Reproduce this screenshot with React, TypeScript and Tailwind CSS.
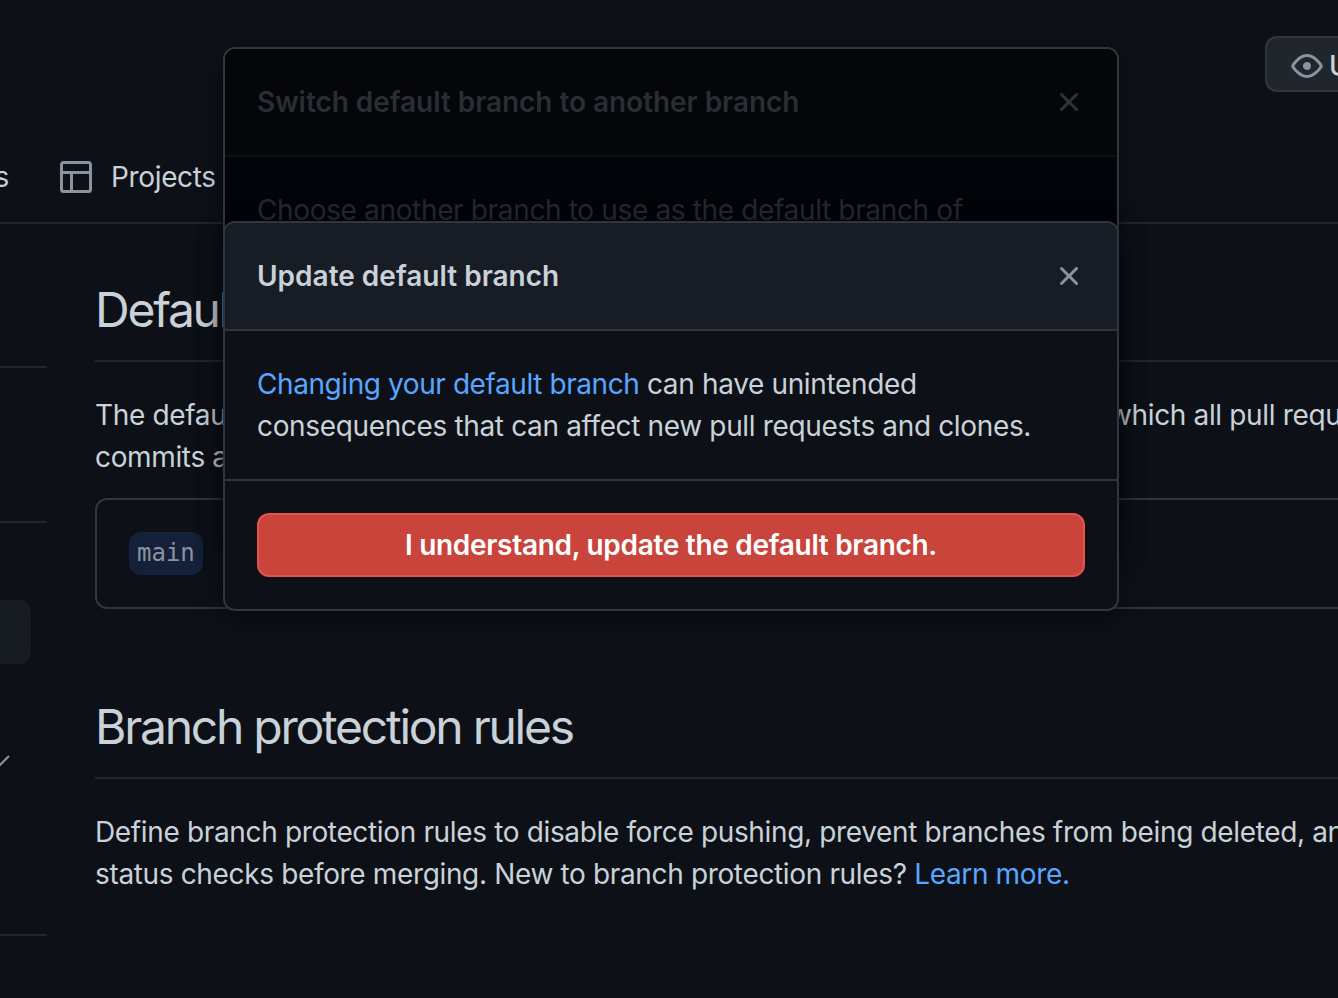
function ProjectIcon() {
  return (
    <svg viewBox="0 0 16 16" className="w-8 h-8 shrink-0 fill-[#8b949e]">
      <path d="M0 1.75C0 .784.784 0 1.75 0h12.5C15.216 0 16 .784 16 1.75v12.5A1.75 1.75 0 0 1 14.25 16H1.75A1.75 1.75 0 0 1 0 14.25ZM1.5 6.5v7.75c0 .138.112.25.25.25H5v-8Zm5 8h7.75a.25.25 0 0 0 .25-.25V6.5h-8Zm8-9.5V1.75a.25.25 0 0 0-.25-.25H1.75a.25.25 0 0 0-.25.25V5Z" />
    </svg>
  )
}

function EyeIcon() {
  return (
    <svg viewBox="0 0 16 16" className="w-8 h-8 shrink-0 fill-[#8b949e]">
      <path d="M8 2c1.981 0 3.671.992 4.933 2.078 1.27 1.091 2.187 2.345 2.637 3.023a1.62 1.62 0 0 1 0 1.798c-.45.678-1.367 1.932-2.637 3.023C11.67 13.008 9.981 14 8 14c-1.981 0-3.671-.992-4.933-2.078C1.797 10.83.88 9.576.43 8.898a1.62 1.62 0 0 1 0-1.798c.45-.677 1.367-1.931 2.637-3.022C4.33 2.992 6.019 2 8 2ZM1.679 7.932a.12.12 0 0 0 0 .136c.411.622 1.241 1.75 2.366 2.717C5.176 11.758 6.527 12.5 8 12.5c1.473 0 2.825-.742 3.955-1.715 1.124-.967 1.954-2.096 2.366-2.717a.12.12 0 0 0 0-.136c-.412-.621-1.242-1.75-2.366-2.717C10.824 4.242 9.473 3.5 8 3.5c-1.473 0-2.825.742-3.955 1.715-1.124.967-1.954 2.096-2.366 2.717ZM8 10a2 2 0 1 1-.001-3.999A2 2 0 0 1 8 10Z" />
    </svg>
  )
}

function CloseIcon({ className }: { className: string }) {
  return (
    <svg viewBox="0 0 16 16" className={`w-8 h-8 shrink-0 ${className}`}>
      <path d="M3.72 3.72a.75.75 0 0 1 1.06 0L8 6.94l3.22-3.22a.749.749 0 0 1 1.275.326.749.749 0 0 1-.215.734L9.06 8l3.22 3.22a.749.749 0 0 1-.326 1.275.749.749 0 0 1-.734-.215L8 9.06l-3.22 3.22a.751.751 0 0 1-1.042-.018.751.751 0 0 1-.018-1.042L6.94 8 3.72 4.78a.75.75 0 0 1 0-1.06Z" />
    </svg>
  )
}

export default function App() {
  return (
    <div className="relative h-[998px] overflow-hidden bg-[#0d1117] text-[#c9d1d9] text-[28px] leading-[42px] tracking-[-0.35px] font-['Inter',sans-serif]">

      {/* repo header */}
      <div className="h-[224px] border-b-2 border-[#21262d] flex flex-col">
        <div className="flex justify-end pt-[36px]">
          <div className="w-[73px] h-[56px] border-2 border-[#30363d] border-r-0 rounded-l-xl bg-[#21262d] flex items-center pl-[24px] pt-[4px] gap-[6px] overflow-hidden">
            <EyeIcon />
            <span className="font-medium">Unwatch</span>
          </div>
        </div>
        <div className="flex items-center mt-[57px] h-[56px]">
          <span className="w-[60px] overflow-hidden flex justify-end pr-[51px] whitespace-nowrap">Insights</span>
          <ProjectIcon />
          <span className="ml-[19px]">Projects</span>
        </div>
      </div>

      <div className="flex">
        {/* settings sidebar, mostly cut off by the window */}
        <div className="w-[47px] shrink-0 relative">
          <div className="h-[144px] border-b-2 border-[#21262d]" />
          <div className="h-[155px] border-b-2 border-[#21262d]" />
          <div className="w-[31px] h-[64px] mt-[77px] rounded-r-xl bg-[#171b22]" />
          <svg viewBox="0 0 12 12" className="w-3 h-3 mt-[91px] -ml-[2px] stroke-[#8b949e] fill-none">
            <path d="M1 11 L11 1" strokeWidth="2" />
          </svg>
          <div className="h-[2px] mt-[167px] bg-[#21262d]" />
        </div>

        {/* settings content */}
        <div className="flex-1 pl-[48px] min-w-0 overflow-hidden">
          <h2 className="text-[48px] leading-[60px] pt-[56px] pb-[20px] h-[138px] border-b-2 border-[#21262d] tracking-[-2.25px] box-border">
            Default branch
          </h2>
          <p className="mt-[32px] whitespace-nowrap">The default branch is considered the “base” branch in your repository, against which all pull requests and code</p>
          <p className="whitespace-nowrap">commits are automatically made, unless you specify a different branch.</p>
          <div className="mt-[20px] h-[111px] w-[1400px] border-2 border-[#30363d] rounded-xl flex items-center pl-[32px]">
            <code className="h-[43px] px-[8px] rounded-xl bg-[#15213a] text-[#8b949e] text-[24px] leading-[43px] tracking-normal font-['DejaVu_Sans_Mono',monospace]">main</code>
          </div>
          <h2 className="mt-[88px] h-[82px] text-[48px] leading-[60px] border-b-2 border-[#21262d] tracking-[-2.25px] whitespace-nowrap">
            Branch protection rules
          </h2>
          <p className="mt-[32px] whitespace-nowrap">Define branch protection rules to disable force pushing, prevent branches from being deleted, and optionally require</p>
          <p className="whitespace-nowrap">
            status checks before merging. New to branch protection rules? <a className="text-[#58a6ff]">Learn more.</a>
          </p>
        </div>
      </div>

      {/* dimmed dialog underneath */}
      <div className="absolute left-[223px] top-[47px] w-[896px] h-[500px] border-2 border-[#30363d] rounded-xl bg-[#010409] overflow-hidden shadow-[0_8px_24px_rgba(1,4,9,0.5)]">
        <div className="h-[108px] border-b-2 border-[#0d1117] bg-[#04060a] px-[32px] flex items-center justify-between">
          <span className="font-semibold text-[#2a2e34] tracking-[-0.05px]">Switch default branch to another branch</span>
          <CloseIcon className="fill-[#2f3339]" />
        </div>
        <p className="px-[32px] pt-[32px] text-[#24282e]">Choose another branch to use as the default branch of</p>
      </div>

      {/* active dialog */}
      <div className="absolute left-[223px] top-[221px] w-[896px] h-[390px] border-2 border-[#30363d] rounded-xl bg-[#0d1117] overflow-hidden shadow-[0_8px_24px_rgba(1,4,9,0.5)]">
        <div className="h-[108px] border-b-2 border-[#30363d] bg-[#181c25] px-[32px] flex items-center justify-between">
          <span className="font-semibold tracking-normal">Update default branch</span>
          <CloseIcon className="fill-[#8b949e]" />
        </div>
        <div className="h-[150px] border-b-2 border-[#30363d] px-[32px] pt-[32px]">
          <p><a className="text-[#58a6ff] tracking-[-0.42px]">Changing your default branch</a> can have unintended</p>
          <p>consequences that can affect new pull requests and clones.</p>
        </div>
        <div className="px-[32px] pt-[32px]">
          <button className="w-full h-[64px] rounded-xl border-2 border-[#e5534b] bg-[#c9453c] text-white font-semibold tracking-[-0.3px]">
            I understand, update the default branch.
          </button>
        </div>
      </div>
    </div>
  )
}
